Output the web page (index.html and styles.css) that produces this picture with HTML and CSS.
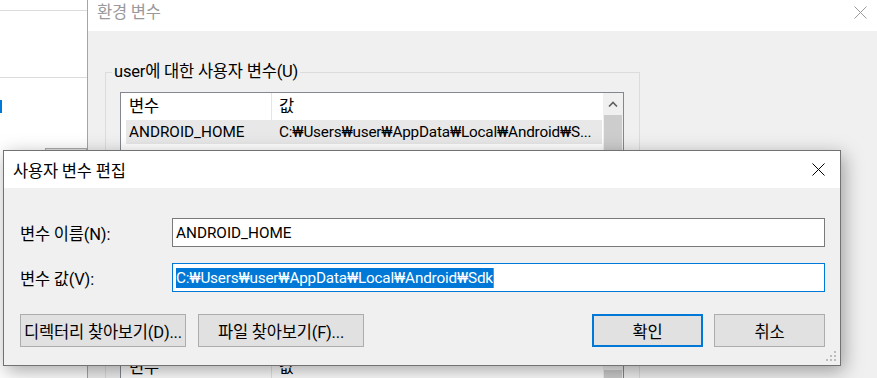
FILE: index.html
```html
<!DOCTYPE html>
<html lang="ko">
<head>
    <meta charset="UTF-8">
    <title>사용자 변수 편집</title>
    <link rel="stylesheet" href="styles.css">
</head>
<body>
    <div class="desktop">
        <div class="side-window">
            <div class="side-line first"></div>
            <div class="side-line"></div>
            <div class="side-mark"></div>
            <div class="side-button"></div>
        </div>

        <div class="env-window">
            <div class="titlebar inactive">
                <span>환경 변수</span>
                <svg class="close" width="13" height="13" viewBox="0 0 13 13">
                    <path d="M0.5 0.5 L12.5 12.5 M12.5 0.5 L0.5 12.5" stroke="#9a9a9a" stroke-width="1" fill="none"/>
                </svg>
            </div>
            <div class="env-body">
                <fieldset class="group">
                    <legend>user에 대한 사용자 변수(U)</legend>
                    <div class="listbox tall">
                        <div class="list-main">
                            <div class="list-head">
                                <span class="col-name">변수</span>
                                <span class="col-value">값</span>
                            </div>
                            <div class="list-row selected">
                                <span class="col-name">ANDROID_HOME</span>
                                <span class="col-value path">C:₩Users₩user₩AppData₩Local₩Android₩S...</span>
                            </div>
                        </div>
                        <div class="scrollbar">
                            <div class="scroll-arrow">
                                <svg width="10" height="6" viewBox="0 0 10 6">
                                    <path d="M1 5.5 L5 1.5 L9 5.5" stroke="#606060" stroke-width="1.6" fill="none"/>
                                </svg>
                            </div>
                            <div class="thumb"></div>
                        </div>
                    </div>
                </fieldset>

                <fieldset class="group second">
                    <legend></legend>
                    <div class="listbox">
                        <div class="list-main">
                            <div class="list-head">
                                <span class="col-name">변수</span>
                                <span class="col-value">값</span>
                            </div>
                        </div>
                        <div class="scrollbar">
                            <div class="scroll-arrow">
                                <svg width="10" height="6" viewBox="0 0 10 6">
                                    <path d="M1 5.5 L5 1.5 L9 5.5" stroke="#606060" stroke-width="1.6" fill="none"/>
                                </svg>
                            </div>
                            <div class="thumb"></div>
                        </div>
                    </div>
                </fieldset>
            </div>
        </div>

        <div class="dialog">
            <div class="titlebar">
                <span>사용자 변수 편집</span>
                <svg class="close" width="13" height="13" viewBox="0 0 13 13">
                    <path d="M0.5 0.5 L12.5 12.5 M12.5 0.5 L0.5 12.5" stroke="#000" stroke-width="1" fill="none"/>
                </svg>
            </div>
            <div class="dialog-body">
                <div class="field">
                    <label>변수 이름(N):</label>
                    <div class="input">ANDROID_HOME</div>
                </div>
                <div class="field">
                    <label>변수 값(V):</label>
                    <div class="input focused"><span class="selection path">C:₩Users₩user₩AppData₩Local₩Android₩Sdk</span><span class="caret"></span></div>
                </div>
                <div class="button-row">
                    <button class="btn">디렉터리 찾아보기(D)...</button>
                    <button class="btn">파일 찾아보기(F)...</button>
                    <div class="spacer"></div>
                    <button class="btn small default">확인</button>
                    <button class="btn small">취소</button>
                </div>
            </div>
            <svg class="grip" width="12" height="12" viewBox="0 0 12 12">
                <rect x="8" y="0" width="2" height="2" fill="#bdbdbd"/>
                <rect x="4" y="4" width="2" height="2" fill="#bdbdbd"/>
                <rect x="8" y="4" width="2" height="2" fill="#bdbdbd"/>
                <rect x="0" y="8" width="2" height="2" fill="#bdbdbd"/>
                <rect x="4" y="8" width="2" height="2" fill="#bdbdbd"/>
                <rect x="8" y="8" width="2" height="2" fill="#bdbdbd"/>
            </svg>
        </div>
    </div>
</body>
</html>
```

FILE: styles.css
```css
body {
    margin: 0;
    font-family: Roboto, "Noto Sans CJK KR", sans-serif;
    font-size: 16.5px;
    letter-spacing: -0.2px;
    color: #000;
    background: #fff;
}

.desktop {
    position: relative;
    width: 877px;
    height: 378px;
    overflow: hidden;
}

/* window on the far left, mostly hidden */
.side-window {
    position: absolute;
    left: 0;
    top: 0;
    width: 87px;
    height: 378px;
    background: #fff;
}

.side-line {
    height: 1px;
    background: #dcdcdc;
    margin-top: 66px;
}

.side-line.first {
    margin-top: 10px;
}

.side-mark {
    width: 2px;
    height: 13px;
    margin-top: 22px;
    background: #0078d7;
}

.side-button {
    margin: 35px 0 0 45px;
    height: 20px;
    border: 1px solid #adadad;
    background: #e1e1e1;
}

/* environment variables window */
.env-window {
    position: absolute;
    left: 87px;
    top: 0;
    width: 790px;
    height: 520px;
    border-left: 1px solid #a5a5a5;
    background: #f0f0f0;
}

.titlebar {
    display: flex;
    align-items: center;
    justify-content: space-between;
    background: #fff;
}

.env-window .titlebar {
    box-sizing: border-box;
    height: 31px;
    padding: 0 11px 6px 9px;
    line-height: 25px;
}

.titlebar.inactive {
    color: #999;
}

.env-body {
    padding: 31px 0 0 17px;
}

.group {
    box-sizing: border-box;
    width: 535px;
    margin: 0;
    padding: 0 15px 46px 14px;
    border: 1px solid #dcdcdc;
    min-width: 0;
}

.group legend {
    padding: 0 2px;
    margin-left: -8px;
    line-height: 20px;
    height: 20px;
}

.group.second {
    margin-top: 32px;
}

.listbox {
    display: flex;
    height: 100px;
    margin-top: 10px;
    border: 1px solid #828790;
    background: #fff;
}

.listbox.tall {
    height: 150px;
}

.list-main {
    flex: 1;
    overflow: hidden;
}

.list-head {
    display: flex;
    height: 27px;
    align-items: stretch;
    line-height: 27px;
}

.list-head .col-name {
    box-sizing: border-box;
    width: 151px;
    padding-left: 8px;
    border-right: 1px solid #e5e5e5;
}

.list-head .col-value {
    padding-left: 7px;
}

.list-row {
    display: flex;
    height: 24px;
    line-height: 24px;
    margin: 0 1px 0 5px;
    white-space: nowrap;
    font-size: 15.3px;
    letter-spacing: 0;
}

.list-row.selected {
    background: #e8e8e8;
}

.list-row .col-name {
    width: 145px;
    padding-left: 3px;
    box-sizing: border-box;
}

.list-row .col-value {
    padding-left: 8px;
    overflow: hidden;
}

.path {
    letter-spacing: -0.2px;
}

.scrollbar {
    width: 20px;
    background: #f0f0f0;
    display: flex;
    flex-direction: column;
    align-items: center;
}

.scroll-arrow {
    height: 22px;
    display: flex;
    align-items: center;
    justify-content: center;
}

.thumb {
    width: 18px;
    height: 120px;
    background: #cdcdcd;
}

/* edit dialog on top */
.dialog {
    position: absolute;
    left: 3px;
    top: 150px;
    width: 838px;
    height: 216px;
    box-sizing: border-box;
    border: 1px solid #727272;
    background: #f0f0f0;
    box-shadow: 3px 5px 18px rgba(0, 0, 0, 0.35);
}

.dialog .titlebar {
    height: 37px;
    padding: 0 15px 0 9px;
}

.dialog-body {
    padding: 30px 15px 0 16px;
}

.field {
    display: flex;
    align-items: center;
}

.field + .field {
    margin-top: 16px;
}

.field label {
    width: 152px;
}

.input {
    flex: 1;
    box-sizing: border-box;
    height: 29px;
    border: 1px solid #7a7a7a;
    background: #fff;
    padding-left: 3px;
    display: flex;
    align-items: center;
    white-space: nowrap;
    font-size: 15.3px;
    letter-spacing: 0;
}

.input.focused {
    border-color: #0078d7;
}

.selection {
    background: #0078d7;
    color: #fff;
    line-height: 20px;
}

.caret {
    width: 1px;
    height: 20px;
    background: #e07a2a;
}

.button-row {
    display: flex;
    margin-top: 22px;
    gap: 12px;
}

.btn {
    width: 166px;
    height: 33px;
    box-sizing: border-box;
    border: 1px solid #adadad;
    background: #e1e1e1;
    font: inherit;
    letter-spacing: inherit;
    white-space: nowrap;
    color: #000;
    padding: 0;
}

.btn.small {
    width: 111px;
}

.btn.default {
    border: 2px solid #0078d7;
    margin-right: -1px;
}

.spacer {
    flex: 1;
}

.grip {
    position: absolute;
    right: 2px;
    bottom: 2px;
}
```
